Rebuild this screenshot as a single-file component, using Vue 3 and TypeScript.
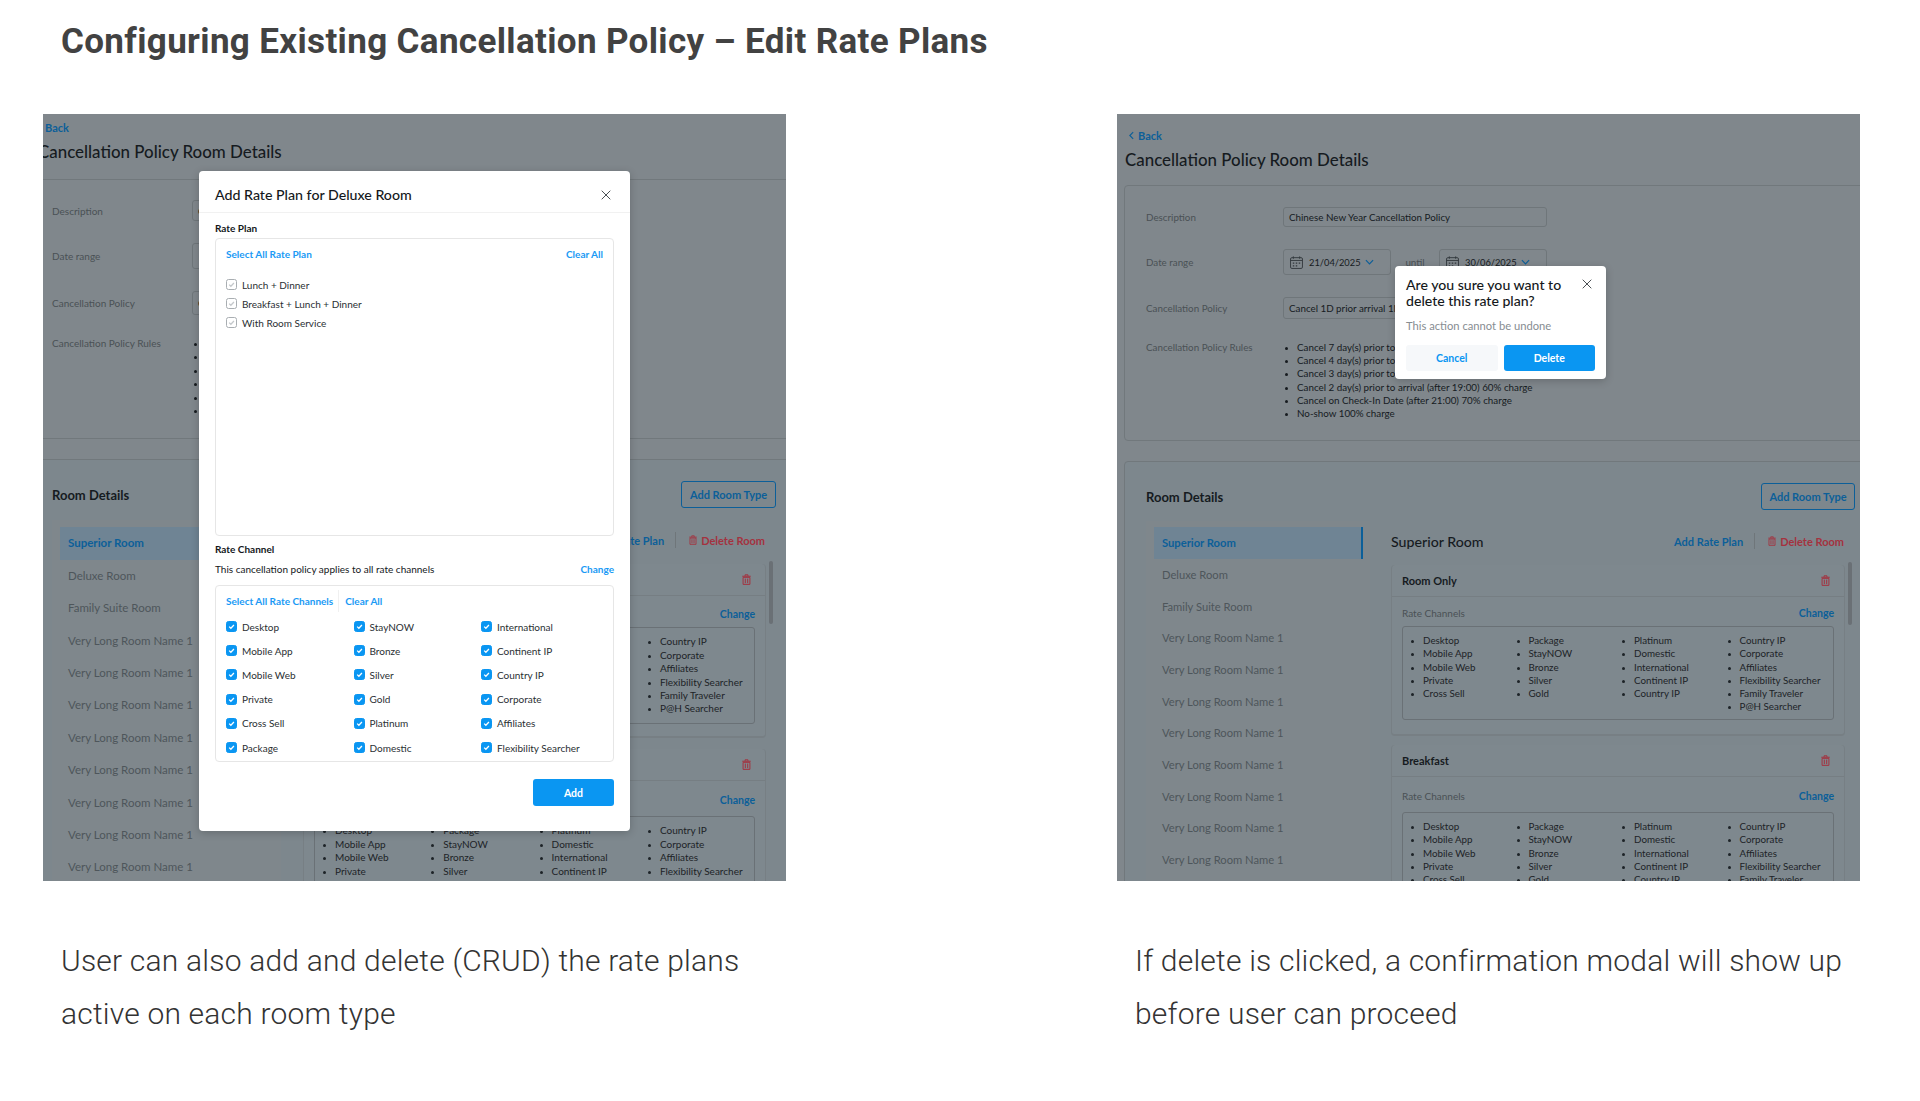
<template>
  <div class="page">
    <svg class="icon-defs" aria-hidden="true">
      <symbol id="i-close" viewBox="0 0 10 10">
        <path d="M0.7 0.7 9.3 9.3M9.3 0.7 0.7 9.3" fill="none" stroke="currentColor" stroke-width="1" />
      </symbol>
      <symbol id="i-trash" viewBox="0 0 10 12">
        <path d="M3.4 2V0.8h3.2V2M0.3 2.4h9.4" fill="none" stroke="currentColor" stroke-width="1.1" />
        <path d="M1.2 3.6h7.6v7.8H1.2zM3.7 5v5M6.3 5v5" fill="none" stroke="currentColor" stroke-width="1.1" />
      </symbol>
      <symbol id="i-calendar" viewBox="0 0 14 14">
        <rect x="0.6" y="1.8" width="12.8" height="11.6" rx="1.4" fill="none" stroke="currentColor" />
        <path d="M0.6 4.8h12.8M3.6 0.4v2.6M10.4 0.4v2.6" fill="none" stroke="currentColor" />
        <path d="M3 7h1.6v1.4H3zM6.2 7h1.6v1.4H6.2zM9.4 7H11v1.4H9.4zM3 10h1.6v1.4H3zM6.2 10h1.6v1.4H6.2z" fill="currentColor" />
      </symbol>
      <symbol id="i-chevron" viewBox="0 0 10 6">
        <path d="M1 1 5 5 9 1" fill="none" stroke="currentColor" stroke-width="1.3" />
      </symbol>
      <symbol id="i-back" viewBox="0 0 6 10">
        <path d="M5 1 1 5 5 9" fill="none" stroke="currentColor" stroke-width="1.4" />
      </symbol>
      <symbol id="i-check" viewBox="0 0 10 10">
        <path d="M2.4 5.1 4.3 7 7.7 3.3" fill="none" stroke="currentColor" stroke-width="1.4" />
      </symbol>
    </svg>

    <h1 class="page-title">Configuring Existing Cancellation Policy – Edit Rate Plans</h1>

    <div class="columns">
      <section v-for="shot in shots" :key="shot.id" class="column">
        <div class="shot" :class="'shot-' + shot.id">
          <a class="back">
            <svg class="back-icon"><use href="#i-back" /></svg>
            Back
          </a>
          <h2 class="shot-title">Cancellation Policy Room Details</h2>

          <div class="card policy-card">
            <div class="field-label">Description</div>
            <div class="input input-desc">Chinese New Year Cancellation Policy</div>

            <div class="field-label">Date range</div>
            <div class="date-range">
              <div class="input input-date">
                <svg class="cal-icon"><use href="#i-calendar" /></svg>
                <span>21/04/2025</span>
                <svg class="chev-icon"><use href="#i-chevron" /></svg>
              </div>
              <span class="until">until</span>
              <div class="input input-date">
                <svg class="cal-icon"><use href="#i-calendar" /></svg>
                <span>30/06/2025</span>
                <svg class="chev-icon"><use href="#i-chevron" /></svg>
              </div>
            </div>

            <div class="field-label">Cancellation Policy</div>
            <div class="input input-policy">Cancel 1D prior arrival 1N charge</div>

            <div class="field-label rules-label">Cancellation Policy Rules</div>
            <ul class="rules">
              <li v-for="rule in rules" :key="rule">{{ rule }}</li>
            </ul>
          </div>

          <div class="card room-card">
            <div class="room-head">
              <h3>Room Details</h3>
              <button class="outline-btn">Add Room Type</button>
            </div>

            <div class="room-body">
              <div class="room-list">
                <div
                  v-for="(room, i) in rooms"
                  :key="i"
                  class="room-row"
                  :class="{ active: i === 0 }"
                >{{ room }}</div>
              </div>

              <div class="room-detail">
                <div class="detail-head">
                  <h3>Superior Room</h3>
                  <div class="detail-actions">
                    <a class="link">Add Rate Plan</a>
                    <span class="divider"></span>
                    <a class="danger">
                      <svg class="trash-small"><use href="#i-trash" /></svg>
                      Delete Room
                    </a>
                  </div>
                </div>

                <div v-for="plan in plans" :key="plan" class="rate-card">
                  <div class="rate-head">
                    <span>{{ plan }}</span>
                    <svg class="trash"><use href="#i-trash" /></svg>
                  </div>
                  <div class="rate-meta">
                    <span>Rate Channels</span>
                    <a class="link">Change</a>
                  </div>
                  <div class="rate-box">
                    <ul v-for="(col, c) in channelColumns" :key="c">
                      <li v-for="name in col" :key="name">{{ name }}</li>
                    </ul>
                  </div>
                </div>

                <div class="scrollbar"></div>
              </div>
            </div>
          </div>

          <!-- add rate plan modal -->
          <div v-if="shot.id === 'left'" class="modal add-modal">
            <div class="add-head">
              <span>Add Rate Plan for Deluxe Room</span>
              <svg class="close"><use href="#i-close" /></svg>
            </div>
            <div class="add-body">
              <div class="section-label">Rate Plan</div>
              <div class="plan-box">
                <div class="select-row">
                  <a class="blue-link">Select All Rate Plan</a>
                  <a class="blue-link">Clear All</a>
                </div>
                <label v-for="name in ratePlans" :key="name" class="check-item plan-item">
                  <span class="box"><svg><use href="#i-check" /></svg></span>
                  {{ name }}
                </label>
              </div>

              <div class="section-label channel-label">Rate Channel</div>
              <div class="applies">
                <span>This cancellation policy applies to all rate channels</span>
                <a class="blue-link">Change</a>
              </div>
              <div class="channel-box">
                <div class="channel-links">
                  <a class="blue-link">Select All Rate Channels</a>
                  <a class="blue-link clear-link">Clear All</a>
                </div>
                <div class="channel-grid">
                  <label v-for="name in channelChecks" :key="name" class="check-item">
                    <span class="box on"><svg><use href="#i-check" /></svg></span>
                    {{ name }}
                  </label>
                </div>
              </div>
              <div class="add-foot">
                <button class="primary-btn add-btn">Add</button>
              </div>
            </div>
          </div>

          <!-- delete confirmation -->
          <div v-else class="modal confirm-modal">
            <div class="confirm-head">
              <span>Are you sure you want to delete this rate plan?</span>
              <svg class="close"><use href="#i-close" /></svg>
            </div>
            <p class="confirm-text">This action cannot be undone</p>
            <div class="confirm-actions">
              <button class="ghost-btn">Cancel</button>
              <button class="primary-btn">Delete</button>
            </div>
          </div>
        </div>

        <p class="caption" v-html="shot.caption"></p>
      </section>
    </div>
  </div>
</template>

<script setup lang="ts">
const shots = [
  { id: 'left', caption: 'User can also add and delete (CRUD) the rate plans<br>active on each room type' },
  { id: 'right', caption: 'If delete is clicked, a confirmation modal will show up<br>before user can proceed' },
];

const rules = [
  'Cancel 7 day(s) prior to arrival (after 15:00) 20% charge',
  'Cancel 4 day(s) prior to arrival (after 16:00) 30% charge',
  'Cancel 3 day(s) prior to arrival (after 18:00) 50% charge',
  'Cancel 2 day(s) prior to arrival (after 19:00) 60% charge',
  'Cancel on Check-In Date (after 21:00) 70% charge',
  'No-show 100% charge',
];

const rooms = [
  'Superior Room',
  'Deluxe Room',
  'Family Suite Room',
  ...Array.from({ length: 8 }, () => 'Very Long Room Name 1'),
];

const plans = ['Room Only', 'Breakfast'];

const channelColumns = [
  ['Desktop', 'Mobile App', 'Mobile Web', 'Private', 'Cross Sell'],
  ['Package', 'StayNOW', 'Bronze', 'Silver', 'Gold'],
  ['Platinum', 'Domestic', 'International', 'Continent IP', 'Country IP'],
  ['Country IP', 'Corporate', 'Affiliates', 'Flexibility Searcher', 'Family Traveler', 'P@H Searcher'],
];

const ratePlans = ['Lunch + Dinner', 'Breakfast + Lunch + Dinner', 'With Room Service'];

const channelChecks = [
  'Desktop', 'Mobile App', 'Mobile Web', 'Private', 'Cross Sell', 'Package',
  'StayNOW', 'Bronze', 'Silver', 'Gold', 'Platinum', 'Domestic',
  'International', 'Continent IP', 'Country IP', 'Corporate', 'Affiliates', 'Flexibility Searcher',
];
</script>

<style>
html,
body {
  margin: 0;
  background: #fff;
}
</style>

<style scoped>
.page {
  width: 1920px;
  height: 1101px;
  overflow: hidden;
  background: #fff;
  font-family: Roboto, "Liberation Sans", sans-serif;
}

.icon-defs {
  position: absolute;
  width: 0;
  height: 0;
}

.page-title {
  margin: 0 0 51px;
  padding: 21px 0 0 61px;
  height: 42px;
  font-size: 35px;
  line-height: 42px;
  font-weight: 700;
  letter-spacing: 0.35px;
  color: #424242;
}

.columns {
  display: grid;
  grid-template-columns: 743px 743px;
  column-gap: 331px;
  padding-left: 43px;
}

.caption {
  margin: 53px 0 0;
  padding-left: 18px;
  font-size: 30px;
  line-height: 53px;
  font-weight: 300;
  letter-spacing: 0.2px;
  color: #333;
  white-space: nowrap;
}

/* mockup */
.shot {
  position: relative;
  height: 767px;
  overflow: hidden;
  background: #80878c;
  font-family: Lato, "Open Sans", sans-serif;
  font-size: var(--ui);
  color: #161b1f;
}

.shot-right {
  --ui: 9.8px;
  --back-top: 14px;
  --back-left: 12px;
  --title-left: 8px;
  --title-bottom: 15px;
  --card-left: 7px;
  --label-col: 137px;
  --card-pad-top: 21px;
  --card-pad-bottom: 20px;
  --desc-h: 20px;
  --policy-h: 22px;
  --head-gap: 11px;
  --list-top: 6px;
  --row-h: 31.7px;
  --list-w: 209px;
  --list-pad: 21px;
  --detail-gap: 11px;
  --detail-w: 454px;
  --col: 105.5px;
  --line: 13.2px;
  --scroll-left: 467px;
  --head-right: 28px;
  --add-w: 94px;
  --list-font: 11.2px;
  --meta-top: 9px;
  --box-h: 94px;
  --box-bottom: 14px;
  --card-gap: 9px;
}

.shot-left {
  --ui: 10px;
  --back-top: 6px;
  --back-left: -7px;
  --title-left: -5px;
  --title-bottom: 17px;
  --card-left: -13px;
  --label-col: 140px;
  --card-pad-top: 20px;
  --card-pad-bottom: 21px;
  --desc-h: 21px;
  --policy-h: 24px;
  --head-gap: 12px;
  --list-top: 7px;
  --row-h: 32.4px;
  --list-w: 214px;
  --list-pad: 21px;
  --detail-gap: 12px;
  --detail-w: 463px;
  --col: 108.3px;
  --line: 13.4px;
  --scroll-left: 476px;
  --head-right: 13px;
  --add-w: 95px;
  --list-font: 11.5px;
  --meta-top: 11px;
  --box-h: 97px;
  --box-bottom: 12px;
  --card-gap: 11px;
}

.back {
  display: flex;
  align-items: center;
  gap: 4px;
  height: 14px;
  margin: 0 0 0 var(--back-left);
  padding-top: var(--back-top);
  font-size: 11px;
  font-weight: 700;
  color: #0c5f99;
}

.back-icon {
  width: 5px;
  height: 9px;
}

.shot-title {
  margin: 8px 0 var(--title-bottom) var(--title-left);
  height: 20px;
  font-size: 16.9px;
  line-height: 20px;
  font-weight: 500;
  white-space: nowrap;
}

.card {
  box-sizing: border-box;
  width: 760px;
  margin-left: var(--card-left);
  border: 1px solid #71787c;
  border-radius: 4px;
}

.policy-card {
  display: grid;
  grid-template-columns: var(--label-col) auto;
  row-gap: 22px;
  align-items: center;
  justify-content: start;
  padding: var(--card-pad-top) 0 var(--card-pad-bottom) 21px;
}

.field-label {
  color: #4a5155;
}

.rules-label {
  align-self: start;
  line-height: 13px;
}

.input {
  box-sizing: border-box;
  border: 1px solid #6f767a;
  border-radius: 3px;
  padding: 0 5px;
  display: flex;
  align-items: center;
  white-space: nowrap;
}

.input-desc {
  width: 264px;
  height: var(--desc-h);
}

.input-policy {
  width: 264px;
  height: var(--policy-h);
}

.date-range {
  display: flex;
  align-items: center;
  width: 264px;
}

.input-date {
  width: 108px;
  height: 26px;
  gap: 6px;
  padding-left: 6px;
  font-size: 9.3px;
}

.until {
  flex: 1;
  text-align: center;
  color: #4a5155;
}

.cal-icon {
  width: 13px;
  height: 13px;
  color: #32383c;
}

.chev-icon {
  width: 9px;
  height: 6px;
  margin-left: -2px;
  color: #0c5f99;
}

.rules {
  margin: 0;
  padding: 0 0 0 14px;
  line-height: var(--line);
  white-space: nowrap;
}

.rules li::marker {
  font-size: 8px;
}

.room-card {
  margin-top: 20px;
  padding-top: 21px;
  height: 500px;
  background: #7d878d;
}

.room-head {
  display: flex;
  align-items: center;
  justify-content: space-between;
  height: 27px;
  padding: 0 var(--head-right) 0 21px;
  margin-bottom: var(--head-gap);
}

h3 {
  margin: 0;
  font-size: 13px;
  font-weight: 700;
}

.outline-btn {
  box-sizing: border-box;
  width: var(--add-w);
  height: 27px;
  padding: 0;
  border: 1px solid #0c5f99;
  border-radius: 3px;
  background: none;
  font: 700 11px Lato, sans-serif;
  color: #0c5f99;
}

.room-body {
  display: flex;
  gap: var(--detail-gap);
  padding-left: var(--list-pad);
}

.room-list {
  box-sizing: border-box;
  width: calc(var(--list-w) + 15px);
  padding: var(--list-top) 7px 7px 8px;
  background: #7f878c;
  flex: none;
}

.room-row {
  height: var(--row-h);
  line-height: var(--row-h);
  padding-left: 8px;
  font-size: var(--list-font);
  color: #4e565b;
  white-space: nowrap;
}

.room-row.active {
  background: #6f8494;
  border-right: 2px solid #0c5f99;
  font-weight: 700;
  color: #0c5f99;
}

.room-detail {
  position: relative;
  width: calc(var(--detail-w) + 25px);
  padding: 7px 0 0 10px;
  box-sizing: border-box;
  flex: none;
}

.detail-head {
  display: flex;
  align-items: center;
  justify-content: space-between;
  width: var(--detail-w);
  height: 26px;
  margin-bottom: 11px;
}

.detail-head h3 {
  font-size: 14.2px;
  font-weight: 500;
}

.detail-actions {
  display: flex;
  align-items: center;
  gap: 11px;
  padding-right: 1px;
  font-size: 11px;
  font-weight: 700;
}

.divider {
  width: 1px;
  height: 16px;
  background: #6f767a;
}

.link {
  color: #0c5f99;
  font-weight: 700;
}

.danger {
  display: flex;
  align-items: center;
  gap: 4px;
  color: #a4323f;
}

.trash-small {
  width: 8px;
  height: 10px;
  margin-left: 2px;
}

.trash {
  width: 9px;
  height: 11px;
  color: #a4323f;
}

.rate-card {
  box-sizing: border-box;
  width: var(--detail-w);
  margin-bottom: var(--card-gap);
  padding-bottom: var(--box-bottom);
  border: 1px solid #777f84;
  border-width: 0 1px 2px;
  border-radius: 4px;
  background: #7e888e;
}

.rate-head {
  display: flex;
  align-items: center;
  justify-content: space-between;
  box-sizing: border-box;
  height: 32px;
  padding: 0 14px 0 10px;
  border-bottom: 1px solid #767e83;
  font-size: 11px;
  font-weight: 700;
}

.rate-meta {
  display: flex;
  align-items: center;
  justify-content: space-between;
  height: 13px;
  padding: var(--meta-top) 10px 7px;
  color: #4a5155;
  font-size: 10px;
}

.rate-meta .link {
  font-size: 10.5px;
}

.rate-card + .rate-card .rate-meta {
  padding: 12px 10px 10px;
}

.rate-box {
  display: grid;
  grid-template-columns: repeat(4, var(--col));
  box-sizing: border-box;
  height: var(--box-h);
  margin: 0 10px;
  padding: 7px 0 0 20px;
  border: 1px solid #6a7176;
  border-radius: 3px;
  color: #1d2327;
}

.rate-box ul {
  margin: 0;
  padding: 0;
  line-height: var(--line);
  white-space: nowrap;
}

.rate-box li::marker {
  font-size: 8px;
}

.scrollbar {
  position: absolute;
  left: var(--scroll-left);
  top: 41px;
  width: 4px;
  height: 63px;
  border-radius: 2px;
  background: #6a7075;
}

/* modals */
.modal {
  position: absolute;
  background: #fff;
  border-radius: 4px;
  box-shadow: 0 2px 8px rgba(0, 0, 0, 0.2);
  color: #14181b;
}

.close {
  width: 10px;
  height: 10px;
  flex: none;
  color: #4a4f53;
}

.add-modal {
  left: 156px;
  top: 57px;
  width: 431px;
  height: 660px;
}

.add-head {
  display: flex;
  align-items: center;
  justify-content: space-between;
  box-sizing: border-box;
  height: 42px;
  padding: 6px 19px 0 16px;
  border-bottom: 1px solid #f1f1f1;
  font-size: 14.2px;
  font-weight: 500;
}

.add-body {
  padding: 0 16px;
}

.section-label {
  height: 13px;
  margin-top: 9px;
  line-height: 13px;
  font-size: 10px;
  font-weight: 700;
}

.plan-box {
  box-sizing: border-box;
  height: 298px;
  margin-top: 3px;
  padding: 7.5px 10px;
  border: 1.5px solid #e6e6e6;
  border-radius: 4px;
}

.select-row {
  display: flex;
  justify-content: space-between;
  height: 14px;
  line-height: 14px;
  margin-bottom: 14.5px;
}

.blue-link {
  font-size: 10px;
  font-weight: 700;
  color: #1a9af5;
}

.check-item {
  display: flex;
  align-items: center;
  gap: 5px;
  font-size: 10px;
  color: #2a2f33;
  white-space: nowrap;
}

.plan-item {
  height: 19px;
}

.box {
  box-sizing: border-box;
  display: block;
  width: 11px;
  height: 11px;
  border: 1px solid #a9aeb2;
  border-radius: 2.5px;
  color: #c4c8cb;
  flex: none;
}

.box svg {
  display: block;
  width: 9px;
  height: 9px;
}

.box.on {
  background: #0a96f2;
  border-color: #0a96f2;
  color: #fff;
}

.channel-label {
  margin-top: 7px;
}

.applies {
  display: flex;
  justify-content: space-between;
  align-items: center;
  height: 14px;
  margin-top: 6px;
  font-size: 10px;
}

.channel-box {
  box-sizing: border-box;
  height: 177px;
  margin-top: 9px;
  padding: 4px 10px 0;
  border: 1.5px solid #e6e6e6;
  border-radius: 4px;
}

.channel-links {
  display: flex;
  align-items: center;
  height: 22px;
  margin-bottom: 2.5px;
}

.clear-link {
  margin-left: 5px;
  padding-left: 6px;
  border-left: 1px solid #f0f0f0;
  line-height: 22px;
}

.channel-grid {
  display: grid;
  grid-auto-flow: column;
  grid-template-rows: repeat(6, 24.2px);
  grid-template-columns: repeat(3, 127.5px);
  align-items: center;
}

.add-foot {
  display: flex;
  justify-content: flex-end;
  margin-top: 17px;
}

.primary-btn,
.ghost-btn {
  height: 26px;
  padding: 0;
  border: none;
  border-radius: 3px;
  font: 700 10.5px Lato, sans-serif;
}

.primary-btn {
  background: #0a96f2;
  color: #fff;
}

.ghost-btn {
  background: #f6f8fa;
  color: #0a96f2;
}

.add-btn {
  width: 81px;
  height: 27px;
}

.confirm-modal {
  box-sizing: border-box;
  left: 278px;
  top: 152px;
  width: 211px;
  height: 113px;
  padding: 11px 11px;
}

.confirm-head {
  display: flex;
  justify-content: space-between;
  gap: 14px;
  padding-right: 3px;
  font-size: 14.1px;
  line-height: 15.5px;
  font-weight: 500;
}

.confirm-head .close {
  margin-top: 2px;
}

.confirm-text {
  margin: 11px 0 0;
  height: 14px;
  line-height: 14px;
  font-size: 11.2px;
  color: #878d92;
}

.confirm-actions {
  display: grid;
  grid-template-columns: 1fr 1fr;
  gap: 6px;
  margin-top: 12px;
}
</style>
